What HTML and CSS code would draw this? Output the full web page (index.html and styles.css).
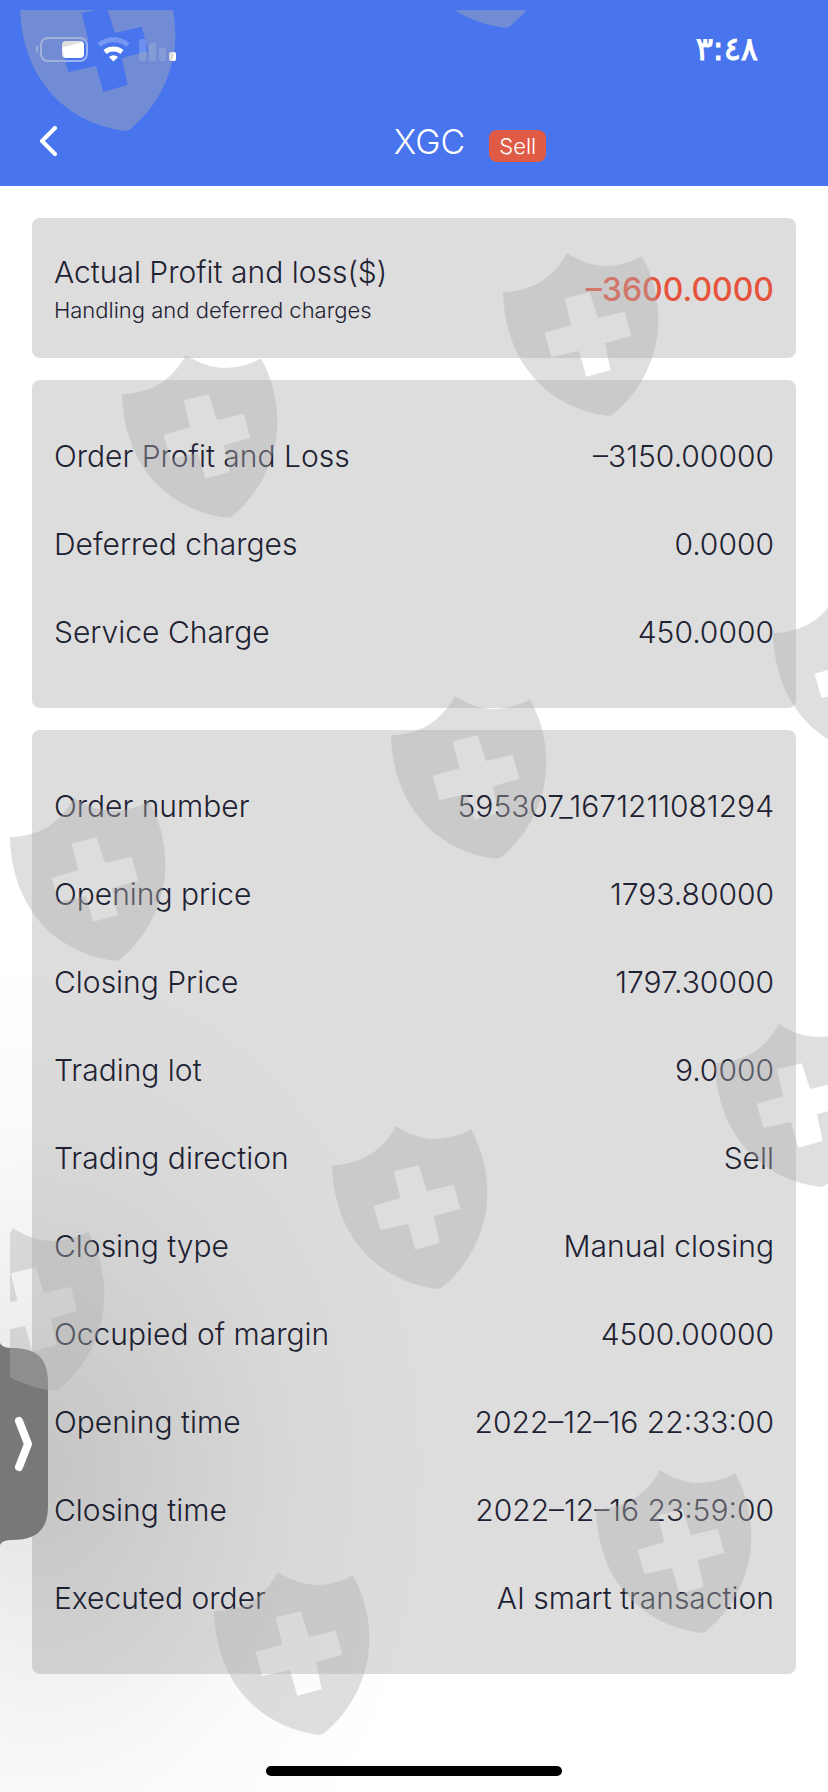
FILE: index.html
```html
<!DOCTYPE html>
<html lang="en">
<head>
    <meta charset="UTF-8">
    <meta name="viewport" content="width=device-width, initial-scale=1.0">
    <title>XGC - Order details</title>
    <link rel="stylesheet" href="styles.css">
</head>
<body>

    <header class="header">
        <div class="status-bar">
            <svg class="status-icons" width="144" height="28" viewBox="0 0 144 28" aria-hidden="true">
                <!-- battery -->
                <path d="M6 10a5 5 0 0 0 0 8z" fill="#fff" opacity=".45"/>
                <rect x="9" y="3" width="46" height="23" rx="7" fill="none" stroke="#fff" stroke-width="2" opacity=".45"/>
                <rect x="30" y="6" width="22" height="17" rx="4" fill="#fff"/>
                <!-- wifi -->
                <g fill="none" stroke="#fff" stroke-width="5">
                    <path d="M67 10a23 23 0 0 1 29 0" opacity=".25"/>
                    <path d="M73 17a14 14 0 0 1 17 0"/>
                </g>
                <path d="M77 22q4.500-3.500 9 0l-4.500 4.500z" fill="#fff"/>
                <!-- signal -->
                <g fill="#fff">
                    <rect x="107" y="4" width="7" height="22" rx="2" opacity=".2"/>
                    <rect x="117" y="8" width="7" height="18" rx="2" opacity=".2"/>
                    <rect x="127" y="13" width="7" height="13" rx="2" opacity=".2"/>
                    <rect x="137" y="17" width="7" height="9" rx="2"/>
                </g>
            </svg>
            <span class="time">٣:٤٨</span>
        </div>
        <div class="nav-bar">
            <button class="back-btn" type="button" aria-label="Back">
                <svg width="20" height="32" viewBox="0 0 20 32" fill="none" stroke="#fff" stroke-width="4" stroke-linecap="round" stroke-linejoin="round"><path d="M16 2L3 15l13 13"/></svg>
            </button>
            <h1 class="title">XGC</h1>
            <span class="badge">Sell</span>
        </div>
    </header>

    <main class="content">
        <section class="card summary">
            <div class="summary-text">
                <h2>Actual Profit and loss($)</h2>
                <p>Handling and deferred charges</p>
            </div>
            <strong class="summary-amount">–3600.0000</strong>
        </section>

        <dl class="card list">
            <div class="row"><dt>Order Profit and Loss</dt><dd>–3150.00000</dd></div>
            <div class="row"><dt>Deferred charges</dt><dd>0.0000</dd></div>
            <div class="row"><dt>Service Charge</dt><dd>450.0000</dd></div>
        </dl>

        <dl class="card list">
            <div class="row"><dt>Order number</dt><dd>595307_1671211081294</dd></div>
            <div class="row"><dt>Opening price</dt><dd>1793.80000</dd></div>
            <div class="row"><dt>Closing Price</dt><dd>1797.30000</dd></div>
            <div class="row"><dt>Trading lot</dt><dd>9.0000</dd></div>
            <div class="row"><dt>Trading direction</dt><dd>Sell</dd></div>
            <div class="row"><dt>Closing type</dt><dd>Manual closing</dd></div>
            <div class="row"><dt>Occupied of margin</dt><dd>4500.00000</dd></div>
            <div class="row"><dt>Opening time</dt><dd>2022–12–16 22:33:00</dd></div>
            <div class="row"><dt>Closing time</dt><dd>2022–12–16 23:59:00</dd></div>
            <div class="row"><dt>Executed order</dt><dd>AI smart transaction</dd></div>
        </dl>
    </main>

    <footer class="home-bar"><span class="home-indicator"></span></footer>

    <!-- side drawer handle -->
    <div class="drawer-shadow"></div>
    <button class="drawer" type="button" aria-label="Open drawer">
        <svg width="48" height="208" viewBox="0 0 48 208">
            <path d="M0 3Q2 8 12 8C34 8 48 16 48 42V166C48 192 34 200 12 200Q2 200 0 205z" fill="#787878"/>
            <path d="M19 81l9 23-9 23" fill="none" stroke="#fff" stroke-width="8" stroke-linecap="round" stroke-linejoin="round"/>
        </svg>
    </button>

    <!-- watermark -->
    <svg class="watermark" aria-hidden="true">
        <defs>
            <g id="shield">
                <path transform="scale(.3333 .328)" fill-rule="evenodd" d="M0 120C70 115 140 95 192 0C260 45 330 55 417 11C450 70 466 135 466 205C466 320 410 425 330 492Q320 498 310 496C130 470 5 330 0 120zM185 138L205 220L125 243L145 317L228 299L250 377L323 357L306 275L385 252L365 179L285 198L260 120z"/>
            </g>
        </defs>
        <use href="#shield" x="10" y="-42"/>
        <use href="#shield" x="390" y="-145"/>
        <use href="#shield" x="493" y="243"/>
        <use href="#shield" x="112" y="345"/>
        <use href="#shield" x="763" y="584"/>
        <use href="#shield" x="381" y="686"/>
        <use href="#shield" x="0" y="788"/>
        <use href="#shield" x="705" y="1014"/>
        <use href="#shield" x="322" y="1116"/>
        <use href="#shield" x="-61" y="1218"/>
        <use href="#shield" x="586" y="1460"/>
        <use href="#shield" x="204" y="1562"/>
    </svg>

</body>
</html>
```
FILE: styles.css
```css
* {
    box-sizing: border-box;
}
body {
    position: relative;
    display: flex;
    flex-direction: column;
    min-height: 100vh;
    margin: 0;
    font-family: Inter, "Liberation Sans", Arial, sans-serif;
    font-size: 30px;
    font-weight: 300;
    line-height: 40px;
    color: #1f2233;
    background-color: #fff;
    overflow-x: hidden;
}
h1, h2, p, dl, dd {
    margin: 0;
    font-weight: 300;
}
button {
    padding: 0;
    border: none;
    background: none;
    cursor: pointer;
}
svg {
    display: block;
}
.header {
    color: #fff;
    background-color: #4874ed;
}
.status-bar {
    display: flex;
    align-items: center;
    justify-content: space-between;
    height: 98px;
    padding: 0 70px 0 32px;
}
.time {
    font-family: "DejaVu Sans", sans-serif;
    font-size: 32px;
    font-weight: normal;
    -webkit-text-stroke: 1px #fff;
}
.nav-bar {
    display: grid;
    grid-template-columns: 1fr auto 1fr;
    align-items: center;
    height: 88px;
    padding: 0 8px 0 39px;
}
.back-btn {
    justify-self: start;
}
.title {
    font-size: 34px;
}
.badge {
    justify-self: start;
    margin: 8px 0 0 24px;
    padding: 0 10px;
    border-radius: 8px;
    font-size: 22px;
    line-height: 32px;
    background-color: #df5b45;
}
.content {
    display: flex;
    flex-direction: column;
    gap: 22px;
    padding: 32px 32px 0;
}
.card {
    border-radius: 8px;
    background-color: #ddd;
}
.summary {
    display: flex;
    align-items: center;
    justify-content: space-between;
    height: 140px;
    padding: 4px 22px 0;
}
.summary h2 {
    font-size: 30px;
}
.summary p {
    font-size: 22px;
    line-height: 36px;
}
.summary-amount {
    font-size: 32px;
    font-weight: 500;
    color: #e6533c;
}
.list {
    padding: 32px 22px;
}
.row {
    display: flex;
    align-items: center;
    justify-content: space-between;
    height: 88px;
}
.home-bar {
    display: flex;
    justify-content: center;
    margin-top: auto;
    padding: 24px 0 16px;
}
.home-indicator {
    width: 296px;
    height: 10px;
    border-radius: 5px;
    background-color: #000;
}
.drawer {
    position: absolute;
    left: 0;
    top: 1340px;
}
.drawer-shadow {
    position: absolute;
    left: 0;
    top: 900px;
    width: 480px;
    height: 892px;
    background: radial-gradient(ellipse 400px 520px at 40px 570px, rgba(0,0,0,.11), rgba(0,0,0,.065) 30%, rgba(0,0,0,.02) 65%, transparent);
    pointer-events: none;
}
.watermark {
    position: absolute;
    left: 10px;
    top: 10px;
    width: calc(100% - 10px);
    height: calc(100% - 10px);
    overflow: hidden;
    fill: #afafaf;
    fill-opacity: .4;
    pointer-events: none;
}
```
